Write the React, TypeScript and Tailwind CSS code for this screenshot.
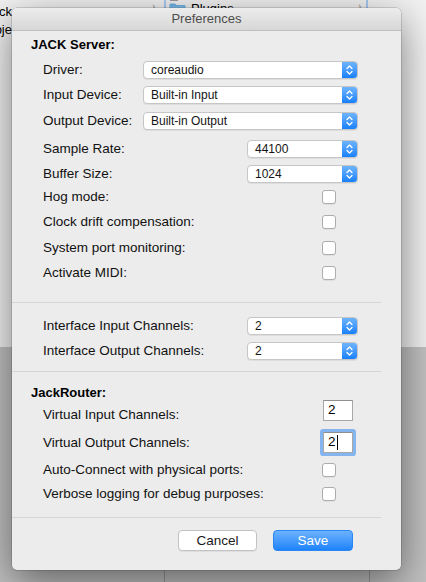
import type { ReactNode } from "react";

const FONT = "font-['Liberation_Sans',Arial,sans-serif]";

function Stepper() {
  return (
    <span className="flex w-[15px] shrink-0 items-center justify-center bg-gradient-to-b from-[#6db4fd] to-[#1580fb]">
      <svg width="9" height="12" viewBox="0 0 9 12" fill="none">
        <path d="M2 4.5 L4.5 2 L7 4.5" stroke="white" strokeWidth="1.3" strokeLinecap="round" strokeLinejoin="round" />
        <path d="M2 7.5 L4.5 10 L7 7.5" stroke="white" strokeWidth="1.3" strokeLinecap="round" strokeLinejoin="round" />
      </svg>
    </span>
  );
}

function Popup({ value, wide }: { value: string; wide?: boolean }) {
  return (
    <div
      className={`ml-auto flex h-[18px] overflow-hidden rounded-[4px] border border-[#c6c6c6] bg-white shadow-[0_1px_0_rgba(0,0,0,0.06)] ${
        wide ? "w-[215px]" : "w-[111px]"
      }`}
    >
      <span className="flex-1 truncate pl-[7px] text-[12px] leading-[16px] text-[#141414]">{value}</span>
      <Stepper />
    </div>
  );
}

function Checkbox() {
  return (
    <span className="ml-auto mr-[22px] h-[14px] w-[14px] rounded-[3px] border border-[#adadad] bg-white shadow-[0_1px_0_rgba(0,0,0,0.06)]" />
  );
}

function Field({ value, focused }: { value: string; focused?: boolean }) {
  return (
    <div
      className={`ml-auto mr-[5px] flex h-[21px] w-[30px] items-center border border-[#a8a8a8] border-t-[#8f8f8f] bg-white pl-[4px] text-[13.5px] text-black ${
        focused ? "rounded-[1px] ring-[3px] ring-[#85b5ee]" : ""
      }`}
    >
      {value}
      {focused && <span className="ml-px h-[15px] w-px bg-black" />}
    </div>
  );
}

function Row({ label, children, className = "", labelClass = "" }: { label: string; children: ReactNode; className?: string; labelClass?: string }) {
  return (
    <div className={`flex items-center pl-[31px] pr-[43px] ${className}`}>
      <span className={`text-[13.5px] leading-[16px] text-[#111] ${labelClass}`}>{label}</span>
      {children}
    </div>
  );
}

function Heading({ children, className = "" }: { children: ReactNode; className?: string }) {
  return (
    <div className={`flex h-[15px] items-center pl-[19px] text-[13px] font-bold text-black ${className}`}>{children}</div>
  );
}

function Separator({ className = "" }: { className?: string }) {
  return <div className={`h-px w-[369px] bg-[#d6d6d6] ${className}`} />;
}

function Backdrop() {
  return (
    <>
      {/* finder window behind the sheet */}
      <div className="absolute inset-x-0 top-0 h-[347px] bg-[#f2f2f2]" />
      <div className="absolute inset-x-0 top-[347px] bottom-0 bg-[#c2c2c2]" />
      <div className="absolute left-[164px] top-0 h-[10px] w-[2px] bg-[#a9c9f2]" />
      <div className="absolute left-[366px] top-0 h-[10px] w-[2px] bg-[#a9c9f2]" />
      <div className="absolute left-[164px] top-[347px] bottom-0 w-px bg-[#9a9a9a]" />
      <div className="absolute left-[369px] top-[347px] bottom-0 w-px bg-[#9a9a9a]" />
      <div className="absolute left-0 top-0 flex h-[40px] w-[12px] flex-col items-end overflow-hidden text-[13px] leading-[16px] text-black">
        <span className="mt-[4px] whitespace-nowrap">Jack</span>
        <span className="mt-[2px] whitespace-nowrap">Proje</span>
      </div>
      <span className="absolute left-[152px] top-[1px] text-[10px] leading-[12px] text-[#8a8a8a]">›</span>
      <span className="absolute left-[358px] top-[1px] text-[10px] leading-[12px] text-[#8a8a8a]">›</span>
      <span className="absolute left-[170px] top-0 h-px w-[8px] bg-[#9a9a9a]" />
      <svg className="absolute left-[169px] top-[3px]" width="17" height="13" viewBox="0 0 17 13">
        <path d="M0.5 1.5 Q0.5 0.5 1.5 0.5 H6 L7.5 2 H15.5 Q16.5 2 16.5 3 V12.5 H0.5 Z" fill="#6fb4e6" />
        <rect x="0.5" y="3.5" width="16" height="9" fill="#85c3ee" />
      </svg>
      <div className="absolute left-[191px] top-0 h-[8px] overflow-hidden">
        <span className="block pt-[1px] text-[13px] leading-[16px] text-black">Plugins</span>
      </div>
    </>
  );
}

export default function App() {
  return (
    <div className={`relative h-[582px] w-[426px] overflow-hidden ${FONT}`}>
      <Backdrop />

      <div className="absolute left-[12px] top-[8px] flex w-[389px] flex-col overflow-hidden rounded-[5px] bg-[#ececec] shadow-[0_12px_40px_rgba(0,0,0,0.5),0_0_0_0.5px_rgba(0,0,0,0.25)]">
        <div className="flex h-[23px] items-center justify-center border-b border-[#c0c0c0] bg-gradient-to-b from-[#ececec] to-[#d7d7d7] text-[13px] text-[#4d4d4d]">
          Preferences
        </div>

        <Heading className="mt-[6px]">JACK Server:</Heading>
        <Row label="Driver:" className="mt-[9px] h-[18px]">
          <Popup value="coreaudio" wide />
        </Row>
        <Row label="Input Device:" className="mt-[7px] h-[18px]">
          <Popup value="Built-in Input" wide />
        </Row>
        <Row label="Output Device:" className="mt-[8px] h-[18px]">
          <Popup value="Built-in Output" wide />
        </Row>
        <Row label="Sample Rate:" className="mt-[10px] h-[18px]">
          <Popup value="44100" />
        </Row>
        <Row label="Buffer Size:" className="mt-[7px] h-[18px]">
          <Popup value="1024" />
        </Row>
        <Row label="Hog mode:" className="mt-[5px] h-[18px]">
          <Checkbox />
        </Row>
        <Row label="Clock drift compensation:" className="mt-[7px] h-[18px]">
          <Checkbox />
        </Row>
        <Row label="System port monitoring:" className="mt-[8px] h-[18px]">
          <Checkbox />
        </Row>
        <Row label="Activate MIDI:" className="mt-[7px] h-[18px]">
          <Checkbox />
        </Row>

        <Separator className="mt-[20px]" />

        <Row label="Interface Input Channels:" className="mt-[14px] h-[18px]">
          <Popup value="2" />
        </Row>
        <Row label="Interface Output Channels:" className="mt-[7px] h-[18px]">
          <Popup value="2" />
        </Row>

        <Separator className="mt-[11px]" />

        <Heading className="mt-[13px]">JackRouter:</Heading>
        <Row label="Virtual Input Channels:" className="h-[21px]" labelClass="mt-[8px]">
          <Field value="2" />
        </Row>
        <Row label="Virtual Output Channels:" className="mt-[11px] h-[21px]">
          <Field value="2" focused />
        </Row>
        <Row label="Auto-Connect with physical ports:" className="mt-[8px] h-[18px]">
          <Checkbox />
        </Row>
        <Row label="Verbose logging for debug purposes:" className="mt-[6px] h-[18px]">
          <Checkbox />
        </Row>

        <Separator className="mt-[14px]" />

        <div className="mt-[12px] mb-[19px] flex justify-end gap-[16px] pr-[48px]">
          <button className="h-[21px] w-[79px] rounded-[4px] border border-[#c2c2c2] bg-white text-[13.5px] text-[#1a1a1a] shadow-[0_1px_0_rgba(0,0,0,0.06)]">
            Cancel
          </button>
          <button className="h-[21px] w-[80px] rounded-[4px] border border-[#2a86f3] bg-gradient-to-b from-[#6ab2fd] to-[#1a83fb] text-[13.5px] text-white">
            Save
          </button>
        </div>
      </div>
    </div>
  );
}
